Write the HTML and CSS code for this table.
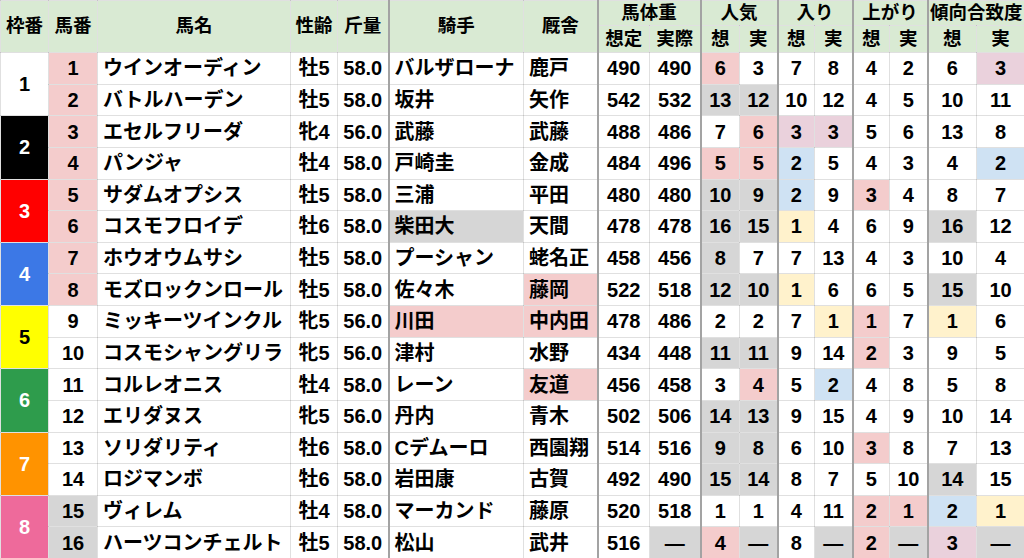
FILE: index.html
```html
<!DOCTYPE html>
<html lang="ja">
<head>
<meta charset="utf-8">
<title>出馬表</title>
<link rel="stylesheet" href="styles.css">
</head>
<body>
<table class="sheet">
<colgroup>
<col class="c48"><col class="c49"><col class="c193"><col class="c47"><col class="c51"><col class="c135"><col class="c74"><col class="c52"><col class="c51"><col class="c39"><col class="c38"><col class="c37"><col class="c38"><col class="c37"><col class="c38"><col class="c49"><col class="c48">
</colgroup>
<thead>
<tr class="h1">
<th rowspan="2">枠番</th><th rowspan="2">馬番</th><th rowspan="2">馬名</th><th rowspan="2">性齢</th><th rowspan="2">斤量</th><th rowspan="2" class="tl">騎手</th><th rowspan="2">厩舎</th><th colspan="2" class="tl">馬体重</th><th colspan="2" class="tl">人気</th><th colspan="2" class="tl">入り</th><th colspan="2" class="tl">上がり</th><th colspan="2" class="tl">傾向合致度</th>
</tr>
<tr class="h2">
<th class="tl">想定</th><th>実際</th><th class="tl">想</th><th>実</th><th class="tl">想</th><th>実</th><th class="tl">想</th><th>実</th><th class="tl">想</th><th>実</th>
</tr>
</thead>
<tbody>
<tr><td class="w w1" rowspan="2">1</td><td class="p">1</td><td class="l">ウインオーディン</td><td>牡5</td><td>58.0</td><td class="l tl">バルザローナ</td><td class="l">鹿戸</td><td class="tl">490</td><td>490</td><td class="tl p">6</td><td>3</td><td class="tl">7</td><td>8</td><td class="tl">4</td><td>2</td><td class="tl">6</td><td class="m">3</td></tr>
<tr><td class="p">2</td><td class="l">バトルハーデン</td><td>牡5</td><td>58.0</td><td class="l tl">坂井</td><td class="l">矢作</td><td class="tl">542</td><td>532</td><td class="tl g">13</td><td class="g">12</td><td class="tl">10</td><td>12</td><td class="tl">4</td><td>5</td><td class="tl">10</td><td>11</td></tr>
<tr><td class="w w2" rowspan="2">2</td><td class="p">3</td><td class="l">エセルフリーダ</td><td>牝4</td><td>56.0</td><td class="l tl">武藤</td><td class="l">武藤</td><td class="tl">488</td><td>486</td><td class="tl">7</td><td class="p">6</td><td class="tl m">3</td><td class="m">3</td><td class="tl">5</td><td>6</td><td class="tl">13</td><td>8</td></tr>
<tr><td class="p">4</td><td class="l">パンジャ</td><td>牡4</td><td>58.0</td><td class="l tl">戸崎圭</td><td class="l">金成</td><td class="tl">484</td><td>496</td><td class="tl p">5</td><td class="p">5</td><td class="tl b">2</td><td>5</td><td class="tl">4</td><td>3</td><td class="tl">4</td><td class="b">2</td></tr>
<tr><td class="w w3" rowspan="2">3</td><td class="p">5</td><td class="l">サダムオプシス</td><td>牡5</td><td>58.0</td><td class="l tl">三浦</td><td class="l">平田</td><td class="tl">480</td><td>480</td><td class="tl g">10</td><td class="g">9</td><td class="tl b">2</td><td>9</td><td class="tl p">3</td><td>4</td><td class="tl">8</td><td>7</td></tr>
<tr><td class="p">6</td><td class="l">コスモフロイデ</td><td>牡6</td><td>58.0</td><td class="l tl g">柴田大</td><td class="l">天間</td><td class="tl">478</td><td>478</td><td class="tl g">16</td><td class="g">15</td><td class="tl y">1</td><td>4</td><td class="tl">6</td><td>9</td><td class="tl g">16</td><td>12</td></tr>
<tr><td class="w w4" rowspan="2">4</td><td class="p">7</td><td class="l">ホウオウムサシ</td><td>牡5</td><td>58.0</td><td class="l tl">プーシャン</td><td class="l">蛯名正</td><td class="tl">458</td><td>456</td><td class="tl g">8</td><td>7</td><td class="tl">7</td><td>13</td><td class="tl">4</td><td>3</td><td class="tl">10</td><td>4</td></tr>
<tr><td class="p">8</td><td class="l">モズロックンロール</td><td>牡5</td><td>58.0</td><td class="l tl">佐々木</td><td class="l p">藤岡</td><td class="tl">522</td><td>518</td><td class="tl g">12</td><td class="g">10</td><td class="tl y">1</td><td>6</td><td class="tl">6</td><td>5</td><td class="tl g">15</td><td>10</td></tr>
<tr><td class="w w5" rowspan="2">5</td><td>9</td><td class="l">ミッキーツインクル</td><td>牝5</td><td>56.0</td><td class="l tl p">川田</td><td class="l p">中内田</td><td class="tl">478</td><td>486</td><td class="tl">2</td><td>2</td><td class="tl">7</td><td class="y">1</td><td class="tl p">1</td><td>7</td><td class="tl y">1</td><td>6</td></tr>
<tr><td>10</td><td class="l">コスモシャングリラ</td><td>牝5</td><td>56.0</td><td class="l tl">津村</td><td class="l">水野</td><td class="tl">434</td><td>448</td><td class="tl g">11</td><td class="g">11</td><td class="tl">9</td><td>14</td><td class="tl p">2</td><td>3</td><td class="tl">9</td><td>5</td></tr>
<tr><td class="w w6" rowspan="2">6</td><td>11</td><td class="l">コルレオニス</td><td>牡4</td><td>58.0</td><td class="l tl">レーン</td><td class="l p">友道</td><td class="tl">456</td><td>458</td><td class="tl">3</td><td class="p">4</td><td class="tl">5</td><td class="b">2</td><td class="tl">4</td><td>8</td><td class="tl">5</td><td>8</td></tr>
<tr><td>12</td><td class="l">エリダヌス</td><td>牝5</td><td>56.0</td><td class="l tl">丹内</td><td class="l">青木</td><td class="tl">502</td><td>506</td><td class="tl g">14</td><td class="g">13</td><td class="tl">9</td><td>15</td><td class="tl">4</td><td>9</td><td class="tl">10</td><td>14</td></tr>
<tr><td class="w w7" rowspan="2">7</td><td>13</td><td class="l">ソリダリティ</td><td>牡6</td><td>58.0</td><td class="l tl">Cデムーロ</td><td class="l">西園翔</td><td class="tl">514</td><td>516</td><td class="tl g">9</td><td class="g">8</td><td class="tl">6</td><td>10</td><td class="tl p">3</td><td>8</td><td class="tl">7</td><td>13</td></tr>
<tr><td>14</td><td class="l">ロジマンボ</td><td>牡6</td><td>58.0</td><td class="l tl">岩田康</td><td class="l">古賀</td><td class="tl">492</td><td>490</td><td class="tl g">15</td><td class="g">14</td><td class="tl">8</td><td>7</td><td class="tl">5</td><td>10</td><td class="tl g">14</td><td>15</td></tr>
<tr><td class="w w8" rowspan="2">8</td><td class="g">15</td><td class="l">ヴィレム</td><td>牡4</td><td>58.0</td><td class="l tl">マーカンド</td><td class="l">藤原</td><td class="tl">520</td><td>518</td><td class="tl">1</td><td>1</td><td class="tl">4</td><td>11</td><td class="tl p">2</td><td class="p">1</td><td class="tl b">2</td><td class="y">1</td></tr>
<tr><td class="g">16</td><td class="l">ハーツコンチェルト</td><td>牡5</td><td>58.0</td><td class="l tl">松山</td><td class="l">武井</td><td class="tl">516</td><td class="g">—</td><td class="tl p">4</td><td class="g">—</td><td class="tl">8</td><td class="g">—</td><td class="tl p">2</td><td class="g">—</td><td class="tl m">3</td><td class="g">—</td></tr>
</tbody>
</table>
</body>
</html>
```

FILE: styles.css
```css
html, body {
  margin: 0;
  padding: 0;
  background: #ffffff;
}

.sheet {
  border-collapse: collapse;
  table-layout: fixed;
  width: 1024px;
  font-family: "Liberation Sans", "Noto Sans CJK JP", sans-serif;
  font-weight: bold;
  color: #000;
}

.c48 { width: 48px; }
.c49 { width: 49px; }
.c193 { width: 193px; }
.c47 { width: 47px; }
.c51 { width: 51px; }
.c135 { width: 135px; }
.c74 { width: 74px; }
.c52 { width: 52px; }
.c39 { width: 39px; }
.c38 { width: 38px; }
.c37 { width: 37px; }

.sheet th,
.sheet td {
  border: 1px solid rgba(0, 0, 0, 0.12);
  padding: 0;
  text-align: center;
  vertical-align: middle;
  white-space: nowrap;
  overflow: hidden;
  line-height: 1;
}

.sheet th {
  background: #d9ead3;
  font-size: 18.5px;
  font-weight: bold;
}

.sheet tr.h1 { height: 25px; }
.sheet tr.h2 { height: 27px; }

.sheet td {
  font-size: 20px;
}

.sheet tbody tr { height: 31.625px; }

.sheet .l {
  text-align: left;
  padding-left: 5px;
}

.sheet .tl {
  border-left: 2px solid #a3a3a3;
}

.p { background: #f4cccc; }
.g { background: #d6d6d6; }
.b { background: #cfe2f3; }
.y { background: #fff2cc; }
.m { background: #ead1dc; }

.w { color: #fff; }
.w1 { background: #ffffff; color: #000; }
.w2 { background: #000000; }
.w3 { background: #ff0000; }
.w4 { background: #3c78e6; }
.w5 { background: #ffff00; color: #000; }
.w6 { background: #2e9c4c; }
.w7 { background: #ff9300; }
.w8 { background: #ee6a9b; }
```
